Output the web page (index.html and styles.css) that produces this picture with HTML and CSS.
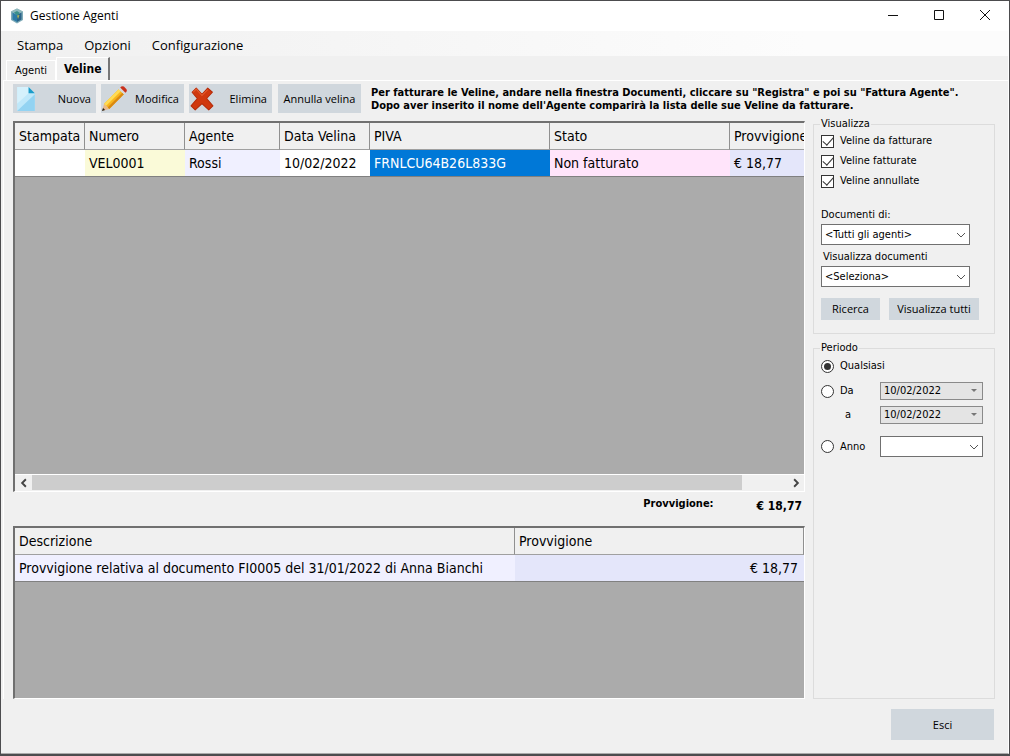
FILE: index.html
```html
<!DOCTYPE html>
<html lang="it">
<head>
<meta charset="utf-8">
<title>Gestione Agenti</title>
<link rel="stylesheet" href="styles.css">
</head>
<body>
<div class="window">
  <header class="titlebar">
    <svg class="app-icon" viewBox="0 0 16 16" aria-hidden="true">
      <path d="M8 0.5 14 3.5V12L8 15.5 2 12V3.5Z" fill="#7fabb8"/>
      <path d="M8 0.5 14 3.5 8 7 2 3.5Z" fill="#8fb9bd"/>
      <path d="M3.500 4.500 8 7V14L3.500 11.500Z" fill="#2c7ba6"/>
      <path d="M8 7 12.500 4.500V11.500L8 14Z" fill="#2a6388"/>
      <path d="M5 4.500 8 3 11 5 8 7.500Z" fill="#3a8f8a"/>
      <path d="M8 7.500 10.500 7 9 11Z" fill="#b3b856"/>
    </svg>
    <h1 class="title">Gestione Agenti</h1>
    <div class="controls">
      <button class="control" aria-label="Riduci a icona"><svg viewBox="0 0 12 12"><path d="M1 5.500H11"/></svg></button>
      <button class="control" aria-label="Ingrandisci"><svg viewBox="0 0 12 12"><path d="M1.500 .5H10.500V9.500H1.500Z"/></svg></button>
      <button class="control" aria-label="Chiudi"><svg viewBox="0 0 12 12"><path d="M1 0 11 10M11 0 1 10"/></svg></button>
    </div>
  </header>
  <nav class="menu">
    <button>Stampa</button>
    <button>Opzioni</button>
    <button>Configurazione</button>
  </nav>
  <div class="tabs" role="tablist">
    <button class="tab" role="tab">Agenti</button>
    <button class="tab active" role="tab" aria-selected="true">Veline</button>
  </div>
  <main class="page">
    <div class="toolbar">
      <button class="btn tool"><svg viewBox="0 0 24 24" aria-hidden="true">
        <path d="M3 1H14L20 7V24H3Z" fill="#bfe8fa"/><path d="M3 24 20 8V24Z" fill="#93d3f2"/><path d="M3 1H14V7L3 17Z" fill="#d5f1fc"/><path d="M14 1 20 7H14Z" fill="#1b9cc9"/></svg>Nuova</button>
      <button class="btn tool"><svg viewBox="0 0 24 24" aria-hidden="true">
        <path d="M0 24 2 17 7 22Z" fill="#e9b98a"/><path d="M0 24 1 21 3 23Z" fill="#222"/><path d="M2 17 16 3 21 8 7 22Z" fill="#f8b51c"/><path d="M2 17 16 3 18 5 4 19Z" fill="#ffdb55"/><path d="M5.500 20.500 19.500 6.500 21 8 7 22Z" fill="#d98812"/><path d="M16 3 18 1.500 22.500 6 21 8Z" fill="#d8d8d8"/><path d="M17.500 1.500Q19-.5 21 .5L23.500 3Q24.500 5 22.500 6.500Z" fill="#c9311c"/></svg>Modifica</button>
      <button class="btn tool"><svg viewBox="0 0 24 24" aria-hidden="true">
        <path d="M2 6 6 2 11.500 8 17 2 21.500 6 16 12 22 19 18 23 11.500 17 5 23 1 19 7 12Z" fill="#d0390f" stroke="#b52b0a" stroke-linejoin="round"/><path d="M3 6 6 3 11.500 9 17 3.500" fill="none" stroke="#e45a2c"/></svg>Elimina</button>
      <button class="btn cancel">Annulla velina</button>
      <p class="hint">Per fatturare le Veline, andare nella finestra Documenti, cliccare su "Registra" e poi su "Fattura Agente".<br>Dopo aver inserito il nome dell'Agente comparirà la lista delle sue Veline da fatturare.</p>
    </div>
    <div class="content">
      <div class="lists">
        <section class="grid-box slips">
          <div class="scroll-area">
            <table>
              <colgroup><col class="w70"><col class="w100"><col class="w95"><col class="w90"><col class="w180"><col class="w180"><col></colgroup>
              <thead><tr><th>Stampata</th><th>Numero</th><th>Agente</th><th>Data Velina</th><th>PIVA</th><th>Stato</th><th>Provvigione</th></tr></thead>
              <tbody><tr><td></td><td class="yellow">VEL0001</td><td class="pale">Rossi</td><td>10/02/2022</td><td class="selected">FRNLCU64B26L833G</td><td class="pink">Non fatturato</td><td class="blue">€ 18,77</td></tr></tbody>
            </table>
          </div>
          <div class="scrollbar">
            <button aria-label="Scorri a sinistra"><svg viewBox="0 0 8 8"><path d="M5.500 1 2.500 4 5.500 7"/></svg></button>
            <div class="track"><div class="thumb"></div></div>
            <button aria-label="Scorri a destra"><svg viewBox="0 0 8 8"><path d="M2.500 1 5.500 4 2.500 7"/></svg></button>
          </div>
        </section>
        <div class="total"><span>Provvigione:</span><output>€ 18,77</output></div>
        <section class="grid-box details">
          <table>
            <colgroup><col class="w500"><col></colgroup>
            <thead><tr><th>Descrizione</th><th>Provvigione</th></tr></thead>
            <tbody><tr><td class="pale">Provvigione relativa al documento FI0005 del 31/01/2022 di Anna Bianchi</td><td class="blue amount">€ 18,77</td></tr></tbody>
          </table>
        </section>
      </div>
      <aside class="side">
        <fieldset class="group">
          <legend>Visualizza</legend>
          <div class="checks">
            <label class="option"><input type="checkbox" checked>Veline da fatturare</label>
            <label class="option"><input type="checkbox" checked>Veline fatturate</label>
            <label class="option"><input type="checkbox" checked>Veline annullate</label>
          </div>
          <label class="caption" for="agent">Documenti di:</label>
          <div class="combo"><select id="agent"><option>&lt;Tutti gli agenti&gt;</option></select><svg viewBox="0 0 10 10"><path d="M1 3 5 7 9 3"/></svg></div>
          <label class="caption indent" for="docs">Visualizza documenti</label>
          <div class="combo"><select id="docs"><option>&lt;Seleziona&gt;</option></select><svg viewBox="0 0 10 10"><path d="M1 3 5 7 9 3"/></svg></div>
          <div class="actions"><button class="btn">Ricerca</button><button class="btn wide">Visualizza tutti</button></div>
        </fieldset>
        <fieldset class="group period">
          <legend>Periodo</legend>
          <label class="option"><input type="radio" name="period" checked>Qualsiasi</label>
          <div class="period-rows">
            <label class="option"><input type="radio" name="period">Da</label>
            <div class="combo date"><select aria-label="Da"><option>10/02/2022</option></select><svg viewBox="0 0 10 10"><path d="M2 3H8L5 6Z"/></svg></div>
            <label class="to" for="to">a</label>
            <div class="combo date"><select id="to"><option>10/02/2022</option></select><svg viewBox="0 0 10 10"><path d="M2 3H8L5 6Z"/></svg></div>
            <label class="option year"><input type="radio" name="period">Anno</label>
            <div class="combo year"><select aria-label="Anno"><option></option></select><svg viewBox="0 0 10 10"><path d="M1 3 5 7 9 3"/></svg></div>
          </div>
        </fieldset>
      </aside>
    </div>
  </main>
  <footer class="footer"><button class="btn exit">Esci</button></footer>
</div>
</body>
</html>
```
FILE: styles.css
```css
* { box-sizing: border-box; }
body {
  margin: 0;
  min-height: 100vh;
  display: flex;
  background: #4c4c4e;
  color: #000;
  font: 11px/14px "DejaVu Sans Condensed", "DejaVu Sans", sans-serif;
}
button, select, input { font: inherit; color: inherit; margin: 0; padding: 0; border: 0; border-radius: 0; }
button { background: none; }
.window {
  flex: 1;
  min-width: 0;
  display: flex;
  flex-direction: column;
  margin: 1px 1px 2px;
  background: #f0f0f0;
  border-right: 1px solid #fff;
  border-bottom: 1px solid #aaa;
}

.titlebar { display: flex; align-items: center; height: 30px; padding-left: 8px; background: #fff; }
.app-icon { width: 16px; height: 16px; }
.title { flex: 1; margin: 0 0 0 5px; font: 12px/16px "Open Sans", sans-serif; }
.controls { display: flex; }
.control { width: 46px; height: 30px; display: grid; place-items: center; }
.control svg { width: 12px; height: 12px; fill: none; stroke: #111; }

.menu {
  display: flex;
  gap: 21px;
  height: 25px;
  padding: 3px 16px 0;
  background: linear-gradient(90deg, #f0f0f0, #fcfcfc 80%);
  font: 13px/22px "Open Sans", sans-serif;
}
.tabs { display: flex; align-items: flex-end; height: 24px; padding-left: 5px; }
.tab { height: 20px; padding: 0 8px; border: 1px solid #fff; border-bottom: 0; }
.tab.active { height: 23px; padding: 0 7px; border-right: 2px solid #777; font: bold 12px/18px "DejaVu Sans Condensed", sans-serif; }

.page { flex: 1; display: flex; flex-direction: column; border-top: 1px solid #fff; border-left: 1px solid #fff; margin-left: 2px; padding: 3px 13px 0 9px; }
.toolbar { display: flex; height: 29px; gap: 5px; }
.btn { height: 22px; background: #d0d7dd; text-align: center; font: 11px/16px "Open Sans", sans-serif; }
.tool { display: flex; align-items: center; justify-content: space-between; width: 83px; height: 29px; padding: 0 5px 0 1px; }
.tool svg { width: 25px; height: 25px; }
.cancel { width: 83px; height: 29px; margin-left: 1px; white-space: nowrap; }
.hint { margin: 2px 0 0 5px; font-weight: bold; line-height: 13px; white-space: nowrap; }

.content { flex: 1; display: grid; grid-template-columns: 1fr 182px; gap: 8px; margin-top: 8px; }
.lists { display: flex; flex-direction: column; min-width: 0; }
.grid-box { border: 2px solid #707070; border-right: 1px solid #fff; border-bottom: 1px solid #fff; background: #ababab; }
.slips { flex: 372; display: flex; flex-direction: column; overflow: hidden; }
.scroll-area { flex: 1; overflow: hidden; }
.details { flex: 172; overflow: hidden; }
table { width: 100%; table-layout: fixed; border-collapse: separate; border-spacing: 0; font-size: 14px; line-height: 18px; }
th, td { height: 27px; padding: 0 4px; text-align: left; font-weight: normal; white-space: nowrap; overflow: hidden; border-bottom: 1px solid #808080; }
th { background: #f0f0f0; border-right: 1px solid #909090; border-bottom-color: #a0a0a0; }
.slips th:last-child { border-right: 0; padding-right: 0; }
td { background: #fff; }
.w70 { width: 70px; } .w90 { width: 90px; } .w95 { width: 95px; } .w100 { width: 100px; } .w180 { width: 180px; } .w500 { width: 500px; }
td.yellow { background: #fafad8; }
td.pale { background: #f0f0ff; }
td.selected { background: #0078d7; color: #fff; }
td.pink { background: #ffe4fa; }
td.blue { background: #e4e6fa; }
td.amount { text-align: right; padding-right: 6px; }

.scrollbar { display: flex; height: 17px; background: #f0f0f0; border-top: 1px solid #fff; }
.scrollbar button { width: 17px; display: grid; place-items: center; }
.scrollbar svg { width: 10px; height: 10px; fill: none; stroke: #444; stroke-width: 1.500; }
.track { flex: 1; }
.thumb { width: 94%; height: 15px; background: #cdcdcd; }
.total { display: flex; justify-content: flex-end; gap: 43px; height: 34px; padding: 5px 3px 0 0; font-weight: bold; }
.total output { padding-top: 2px; font-size: 12px; }

.side { display: flex; flex-direction: column; gap: 7px; margin-top: -4px; }
.group { min-width: 0; margin: 0; padding: 3px 11px 13px 7px; border: 1px solid #dcdcdc; }
.group legend { padding: 0 1px; margin-left: -1px; }
.period { flex: 1; padding-top: 4px; }
.checks { display: grid; gap: 6px; margin-bottom: 20px; }
.option { display: flex; align-items: center; gap: 6px; }
.option input { appearance: none; display: grid; place-items: center; width: 13px; height: 13px; border: 1px solid #333; background: #fff; }
.option input[type="checkbox"]:checked::before { content: ""; width: 5px; height: 9px; margin-top: -3px; border: solid #333; border-width: 0 1px 1px 0; transform: rotate(42deg); }
.option input[type="radio"] { border-radius: 50%; }
.option input[type="radio"]:checked::before { content: ""; width: 7px; height: 7px; border-radius: 50%; background: #333; }
.caption { display: block; margin-bottom: 2px; }
.caption.indent { margin: 5px 0 2px 2px; }
.combo { display: grid; width: 149px; height: 21px; }
.combo > * { grid-area: 1 / 1; }
.combo select { appearance: none; width: 100%; padding: 0 20px 0 3px; border: 1px solid #707070; background: #fff; }
.combo svg { width: 10px; height: 10px; justify-self: end; align-self: center; margin-right: 4px; fill: none; stroke: #555; pointer-events: none; }
.actions { display: flex; gap: 9px; margin-top: 11px; }
.actions .btn { width: 59px; white-space: nowrap; }
.actions .wide { width: 90px; }
.period-rows { display: grid; grid-template-columns: 59px 103px; row-gap: 6px; margin-top: 9px; align-items: center; }
.period-rows .combo { width: 103px; }
.combo.date { height: 18px; }
.combo.date select { background: #e4e4e4; border-color: #8a8a8a; }
.combo.date svg { fill: #777; stroke: none; }
.to { padding-left: 24px; }
.year { margin-top: 6px; }

.footer { display: flex; justify-content: flex-end; padding: 10px 14px 13px; }
.exit { width: 103px; height: 31px; }
```
